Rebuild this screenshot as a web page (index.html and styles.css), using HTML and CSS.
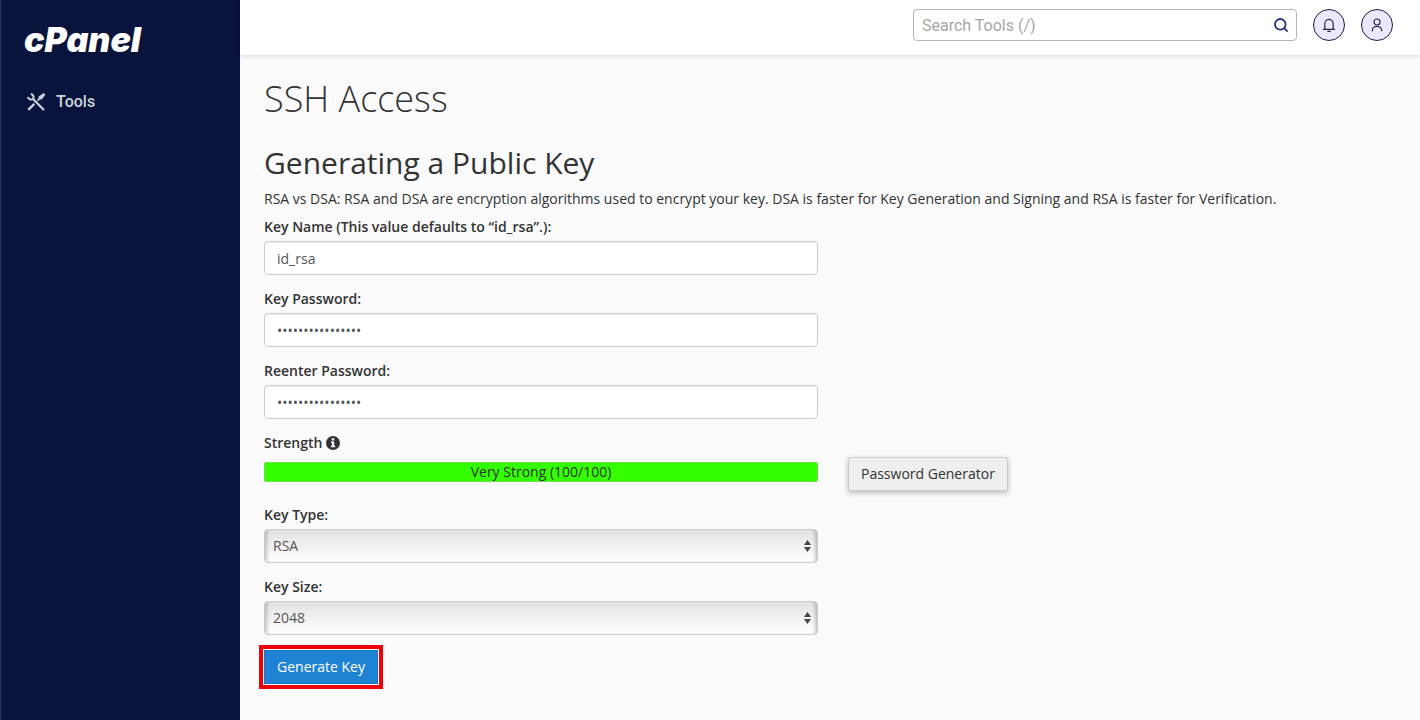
FILE: index.html
```html
<!DOCTYPE html>
<html lang="en">
<head>
    <meta charset="UTF-8">
    <meta name="viewport" content="width=device-width, initial-scale=1.0">
    <title>cPanel - SSH Access</title>
    <link rel="stylesheet" href="styles.css">
</head>
<body>
    <aside class="sidebar">
        <a href="#" class="logo">cPanel</a>
        <nav>
            <a href="#" class="nav-link">
                <svg width="20" height="20" viewBox="0 0 20 20" fill="none" stroke="currentColor">
                    <path d="M7.5 7.5 L18 18" stroke-width="2.2"/>
                    <path d="M2 4.8 A3.2 3.2 0 0 0 7 7 A3.2 3.2 0 0 0 4.8 2" stroke-width="2"/>
                    <path d="M8.3 11.9 L2.3 17.9" stroke-width="2.4"/>
                    <path d="M11.5 8.7 L14 6.2" stroke-width="1.8"/>
                    <path d="M13.2 5 L17.5 1.8 L18.5 2.8 L15.2 7 Z" fill="currentColor" stroke-width="1.4"/>
                </svg>
                <span>Tools</span>
            </a>
        </nav>
    </aside>

    <div class="page">
        <header class="topbar">
            <form class="search">
                <input type="text" placeholder="Search Tools (/)" aria-label="Search Tools">
                <button type="button" aria-label="Search">
                    <svg width="16" height="16" viewBox="0 0 16 16" fill="none" stroke="currentColor" stroke-width="1.8">
                        <circle cx="7.3" cy="7.3" r="5.3"/>
                        <path d="M11.2 11.2 L14.6 14.6"/>
                    </svg>
                </button>
            </form>
            <button type="button" class="round-btn" aria-label="Notifications">
                <svg width="16" height="16" viewBox="0 0 16 16" fill="none" stroke="currentColor" stroke-width="1.2">
                    <path d="M2 12.3 H14 M3.8 12.3 V7 A4.2 4.7 0 0 1 12.2 7 V12.3 M6.4 14.3 H9.6"/>
                </svg>
            </button>
            <button type="button" class="round-btn" aria-label="Account">
                <svg width="16" height="16" viewBox="0 0 16 16" fill="none" stroke="currentColor" stroke-width="1.2">
                    <circle cx="8" cy="5" r="3"/>
                    <path d="M3.4 14.2 V13 A4.6 3.6 0 0 1 12.6 13 V14.2"/>
                </svg>
            </button>
        </header>

        <main class="content">
            <h1>SSH Access</h1>
            <h2>Generating a Public Key</h2>
            <p>RSA vs DSA: RSA and DSA are encryption algorithms used to encrypt your key. DSA is faster for Key Generation and Signing and RSA is faster for Verification.</p>

            <form class="key-form">
                <div class="form-group">
                    <label for="key-name">Key Name (This value defaults to “id_rsa”.):</label>
                    <input type="text" id="key-name" class="form-control" value="id_rsa">
                </div>
                <div class="form-group">
                    <label for="key-pass">Key Password:</label>
                    <input type="password" id="key-pass" class="form-control" value="Xk29vLq0PzR7mWt4">
                </div>
                <div class="form-group">
                    <label for="key-pass2">Reenter Password:</label>
                    <input type="password" id="key-pass2" class="form-control" value="Xk29vLq0PzR7mWt4">
                </div>
                <div class="form-group">
                    <span class="label">Strength
                        <svg width="14" height="14" viewBox="0 0 14 14">
                            <circle cx="7" cy="7" r="7" fill="#333"/>
                            <path d="M5.8 2.2 H8.2 V4.4 H5.8 Z M5 5.5 H8.2 V9.8 H9.2 V11.2 H5 V9.8 H5.9 V6.9 H5 Z" fill="#fff"/>
                        </svg>
                    </span>
                    <div class="strength-bar">Very Strong (100/100)</div>
                    <button type="button" class="btn btn-default">Password Generator</button>
                </div>
                <div class="form-group">
                    <label for="key-type">Key Type:</label>
                    <div class="select">
                        <select id="key-type">
                            <option>RSA</option>
                            <option>DSA</option>
                        </select>
                        <svg width="7" height="12" viewBox="0 0 7 12"><path d="M0 5 L3.5 0 L7 5 Z M0 7 L3.5 12 L7 7 Z" fill="#444"/></svg>
                    </div>
                </div>
                <div class="form-group">
                    <label for="key-size">Key Size:</label>
                    <div class="select">
                        <select id="key-size">
                            <option>2048</option>
                            <option>4096</option>
                        </select>
                        <svg width="7" height="12" viewBox="0 0 7 12"><path d="M0 5 L3.5 0 L7 5 Z M0 7 L3.5 12 L7 7 Z" fill="#444"/></svg>
                    </div>
                </div>
                <button type="button" class="btn btn-primary">Generate Key</button>
            </form>
        </main>
    </div>
</body>
</html>
```
FILE: styles.css
```css
* {
    box-sizing: border-box;
}

body {
    margin: 0;
    min-height: 100vh;
    display: flex;
    font-family: "Open Sans", sans-serif;
    font-size: 14px;
    line-height: 20px;
    color: #333;
    background-color: #fafafa;
}

button, input, select {
    font-family: inherit;
    font-size: inherit;
}

svg {
    display: block;
}

/* sidebar */
.sidebar {
    flex: 0 0 240px;
    padding: 20px 24px 20px 23px;
    border-left: 1px solid #2b3560;
    background-color: #09143c;
}

.logo {
    display: block;
    font-family: Inter, sans-serif;
    font-size: 34px;
    font-weight: 900;
    font-style: italic;
    line-height: 40px;
    color: #fff;
    text-decoration: none;
}

.nav-link {
    display: flex;
    align-items: center;
    gap: 10px;
    margin-top: 32px;
    padding-left: 2px;
    font-family: Roboto, sans-serif;
    font-size: 16px;
    font-weight: 500;
    color: #cdd3da;
    text-decoration: none;
}

/* top bar */
.page {
    flex: 1;
    min-width: 0;
}

.topbar {
    display: flex;
    justify-content: flex-end;
    gap: 16px;
    height: 55px;
    padding: 9px 27px 0;
    background-color: #fff;
    box-shadow: 0 1px 4px rgba(0, 0, 0, 0.15);
}

.search {
    display: flex;
    width: 384px;
    height: 32px;
    border: 1px solid #b1b3c8;
    border-radius: 4px;
}

.search input {
    flex: 1;
    min-width: 0;
    padding: 0 8px;
    border: none;
    background: none;
    font-family: Roboto, sans-serif;
    font-size: 16px;
}

.search input::placeholder {
    color: #a6a6a6;
}

.search button {
    padding: 0 7px;
    border: none;
    background: none;
    color: #293079;
}

.round-btn {
    display: flex;
    justify-content: center;
    align-items: center;
    width: 32px;
    height: 32px;
    padding: 0;
    border: 1px solid #1b1d4d;
    border-radius: 50%;
    background-color: #eae8fe;
    color: #23254f;
}

/* content */
.content {
    padding: 24px 18px 36px 24px;
}

h1 {
    margin: 0 0 24px;
    font-size: 36px;
    font-weight: 300;
    line-height: 40px;
}

h2 {
    margin: 0 0 6px;
    font-size: 30px;
    font-weight: 400;
    line-height: 40px;
}

p {
    margin: 0 0 8px;
}

.form-group {
    display: grid;
    grid-template-columns: 1fr 1fr;
    gap: 4px 30px;
    margin-bottom: 14px;
}

label, .label {
    grid-column: 1 / 3;
    font-weight: 600;
}

.label {
    display: flex;
    align-items: center;
    gap: 4px;
}

.form-control {
    width: 100%;
    height: 34px;
    padding: 0 12px;
    border: 1px solid #ccc;
    border-radius: 4px;
    background-color: #fff;
    box-shadow: inset 0 1px 1px rgba(0, 0, 0, 0.08);
    color: #555;
}

.strength-bar {
    height: 20px;
    margin-top: 5px;
    border: 1px solid #6fdc4e;
    border-radius: 2px;
    background-color: #3f0;
    line-height: 18px;
    text-align: center;
}

.select {
    position: relative;
}

.select select {
    width: 100%;
    height: 34px;
    padding: 0 24px 1px 8px;
    border: 1px solid #ccc;
    border-radius: 4px;
    appearance: none;
    background: linear-gradient(#e2e2e2, #fff);
    box-shadow: inset 5px 0 4px -4px rgba(0, 0, 0, 0.3), inset -5px 0 4px -4px rgba(0, 0, 0, 0.3);
    color: #555;
}

.select svg {
    position: absolute;
    top: 11px;
    right: 7px;
    pointer-events: none;
}

.btn {
    justify-self: start;
    height: 34px;
    padding: 0 12px 1px;
    border: 1px solid #ccc;
    border-radius: 2px;
}

.btn-default {
    background-color: #eee;
    box-shadow: 0 2px 5px rgba(0, 0, 0, 0.26);
    color: #333;
}

.btn-primary {
    margin-top: 1px;
    border-color: #1b75bb;
    border-radius: 0;
    background-color: #1f83d3;
    outline: 4px solid #f00008;
    outline-offset: 1px;
    font-weight: 500;
    color: #fff;
}
```
